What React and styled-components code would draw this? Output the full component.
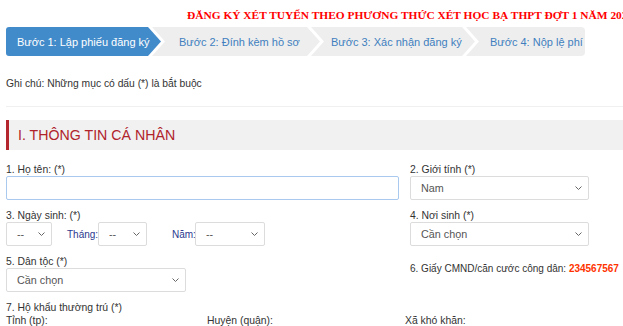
import React from "react";
import styled, { createGlobalStyle } from "styled-components";

const Global = createGlobalStyle`
  html, body {
    margin: 0;
    padding: 0;
    background: #fff;
    overflow: hidden;
  }
  body {
    font-family: "Liberation Sans", Arial, sans-serif;
    color: #333;
  }
`;

const Page = styled.div`
  width: 623px;
  height: 326px;
  overflow: hidden;
`;

const Title = styled.h1`
  margin: 0;
  padding: 8px 0 0 187px;
  font-family: "Liberation Serif", "Times New Roman", serif;
  font-size: 11.4px;
  line-height: 14px;
  font-weight: bold;
  color: #ff0000;
  white-space: nowrap;
`;

const Steps = styled.div`
  display: flex;
  margin: 5px 0 0 6px;
`;

const shapes = {
  first: "polygon(0 0, calc(100% - 13px) 0, 100% 50%, calc(100% - 13px) 100%, 0 100%)",
  middle:
    "polygon(0 0, calc(100% - 13px) 0, 100% 50%, calc(100% - 13px) 100%, 0 100%, 13px 50%)",
  last: "polygon(0 0, 100% 0, 100% 100%, 0 100%, 13px 50%)",
};

const Step = styled.div`
  flex: none;
  box-sizing: border-box;
  height: 29px;
  width: ${(p) => p.$w}px;
  padding-left: ${(p) => p.$pl}px;
  margin-left: ${(p) => (p.$kind === "first" ? 0 : -9)}px;
  display: flex;
  align-items: center;
  font-size: 11px;
  white-space: nowrap;
  background: ${(p) => (p.$active ? "#428bca" : "#eeeeee")};
  color: ${(p) => (p.$active ? "#fff" : "#3f7fbf")};
  border-radius: ${(p) =>
    p.$kind === "first" ? "3px 0 0 3px" : p.$kind === "last" ? "0 4px 4px 0" : "0"};
  clip-path: ${(p) => shapes[p.$kind]};
`;

const Note = styled.p`
  margin: 22px 0 0 6px;
  font-size: 10.3px;
  line-height: 12px;
`;

const Divider = styled.hr`
  margin: 16px 0 0 6px;
  border: 0;
  border-top: 1px solid #f0f0f0;
`;

const SectionHead = styled.h2`
  margin: 13px 0 0 6px;
  height: 30px;
  display: flex;
  align-items: center;
  padding-left: 9px;
  background: #f1f1f1;
  border-left: 3px solid #b3262d;
  font-size: 14.2px;
  font-weight: normal;
  color: #b0232a;
`;

const Form = styled.div`
  margin-top: 13px;
  padding: 0 6px;
  display: flex;
  flex-direction: column;
  gap: 9px;
`;

const Row = styled.div`
  display: grid;
  grid-template-columns: 393px 179px;
  column-gap: 11px;
`;

const Field = styled.div`
  display: flex;
  flex-direction: column;
`;

const Label = styled.label`
  font-size: 10.4px;
  line-height: 13px;
  color: #333;
`;

const TextInput = styled.input`
  box-sizing: border-box;
  height: 24px;
  width: 100%;
  border: 1px solid #a9c9ef;
  border-radius: 2px;
  outline: none;
  padding: 0 10px;
`;

const SelectWrap = styled.div`
  position: relative;
  flex: none;
  width: ${(p) => (p.$w ? `${p.$w}px` : "100%")};
  height: 24px;
`;

const Select = styled.select`
  appearance: none;
  box-sizing: border-box;
  width: 100%;
  height: 100%;
  border: 1px solid #dcdcdc;
  border-radius: 2px;
  background: #fff;
  padding: 0 0 0 10px;
  font-family: "Liberation Sans", Arial, sans-serif;
  font-size: 10.8px;
  color: #555;
  outline: none;
`;

const Chevron = styled.svg`
  position: absolute;
  right: 7px;
  top: 10px;
  pointer-events: none;
`;

const DateRow = styled.div`
  display: flex;
  align-items: center;
`;

const DateLabel = styled.span`
  font-size: 10px;
  color: #2b3990;
  margin-left: ${(p) => p.$ml}px;
  width: ${(p) => p.$w}px;
`;

const IdLine = styled.div`
  margin-top: 7px;
  font-size: 10px;
  line-height: 13px;
  white-space: nowrap;
`;

const IdNumber = styled.b`
  color: #ff3300;
`;

const AddressRow = styled.div`
  display: grid;
  grid-template-columns: 201px 198px 1fr;
`;

const Dropdown = ({ value, w }) => (
  <SelectWrap $w={w}>
    <Select defaultValue={value}>
      <option>{value}</option>
    </Select>
    <Chevron width="7" height="4" viewBox="0 0 7 4">
      <polyline points="0.5,0.5 3.5,3.5 6.5,0.5" fill="none" stroke="#666" strokeWidth="1" />
    </Chevron>
  </SelectWrap>
);

export default function App() {
  return (
    <Page>
      <Global />
      <Title>ĐĂNG KÝ XÉT TUYỂN THEO PHƯƠNG THỨC XÉT HỌC BẠ THPT ĐỢT 1 NĂM 2023</Title>
      <Steps>
        <Step $kind="first" $active $w={155} $pl={11}>
          Bước 1: Lập phiếu đăng ký
        </Step>
        <Step $kind="middle" $w={168} $pl={27}>
          Bước 2: Đính kèm hồ sơ
        </Step>
        <Step $kind="middle" $w={164} $pl={20}>
          Bước 3: Xác nhận đăng ký
        </Step>
        <Step $kind="last" $w={119} $pl={24}>
          Bước 4: Nộp lệ phí
        </Step>
      </Steps>
      <Note>Ghi chú: Những mục có dấu (*) là bắt buộc</Note>
      <Divider />
      <SectionHead>I. THÔNG TIN CÁ NHÂN</SectionHead>
      <Form>
        <Row>
          <Field>
            <Label>1. Họ tên: (*)</Label>
            <TextInput />
          </Field>
          <Field>
            <Label>2. Giới tính (*)</Label>
            <Dropdown value="Nam" />
          </Field>
        </Row>
        <Row>
          <Field>
            <Label>3. Ngày sinh: (*)</Label>
            <DateRow>
              <Dropdown value="--" w={46} />
              <DateLabel $ml={15} $w={31}>Tháng:</DateLabel>
              <Dropdown value="--" w={49} />
              <DateLabel $ml={25} $w={23}>Năm:</DateLabel>
              <Dropdown value="--" w={70} />
            </DateRow>
          </Field>
          <Field>
            <Label>4. Nơi sinh (*)</Label>
            <Dropdown value="Cần chọn" />
          </Field>
        </Row>
        <Row>
          <Field>
            <Label>5. Dân tộc (*)</Label>
            <Dropdown value="Cần chọn" w={180} />
          </Field>
          <IdLine>
            6. Giấy CMND/căn cước công dân: <IdNumber>234567567</IdNumber>
          </IdLine>
        </Row>
        <Field>
          <Label>7. Hộ khẩu thường trú (*)</Label>
          <AddressRow>
            <Label>Tỉnh (tp):</Label>
            <Label>Huyện (quận):</Label>
            <Label>Xã khó khăn:</Label>
          </AddressRow>
        </Field>
      </Form>
    </Page>
  );
}
